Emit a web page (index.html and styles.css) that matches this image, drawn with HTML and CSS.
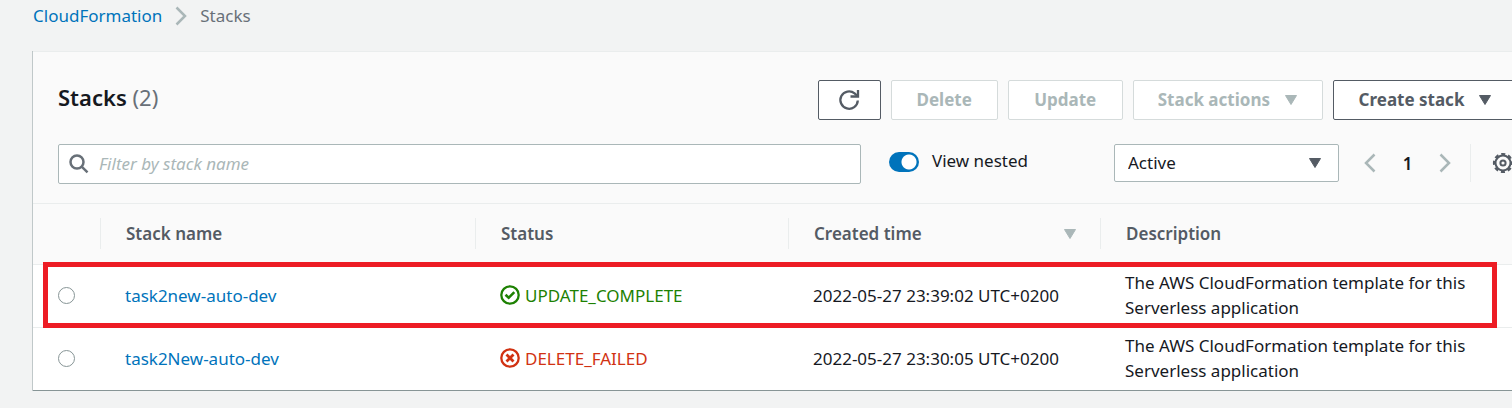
FILE: index.html
```html
<!DOCTYPE html>
<html lang="en">
<head>
<meta charset="utf-8">
<title>CloudFormation - Stacks</title>
<link rel="stylesheet" href="styles.css">
</head>
<body>
<nav class="breadcrumb" aria-label="Breadcrumb">
  <a class="link" href="#">CloudFormation</a>
  <svg class="chevron" width="12" height="20" viewBox="0 0 12 20"><path d="M1.500 1.500L10 10L1.500 18.500"/></svg>
  <span>Stacks</span>
</nav>
<main class="panel">
  <header class="panel-header">
    <h1 class="title">Stacks <span class="count">(2)</span></h1>
    <div class="actions">
      <button class="btn btn-icon" type="button" aria-label="Refresh">
        <svg width="22" height="22" viewBox="0 0 22 22" fill="none" stroke="currentColor" stroke-width="2.300"><path d="M19.800 11.500a8.700 8.700 0 1 1-3.200-7.200L19.500 7"/><path d="M20 1v6.500h-7.500"/></svg>
      </button>
      <button class="btn btn-delete" type="button" disabled>Delete</button>
      <button class="btn btn-update" type="button" disabled>Update</button>
      <button class="btn btn-menu" type="button" disabled>Stack actions <svg class="caret" width="14" height="12" viewBox="0 0 14 12"><path d="M1.500 1.500h11L7 10.500z"/></svg></button>
      <button class="btn btn-menu" type="button">Create stack <svg class="caret" width="14" height="12" viewBox="0 0 14 12"><path d="M1.500 1.500h11L7 10.500z"/></svg></button>
    </div>
  </header>
  <div class="filters">
    <div class="search">
      <svg width="20" height="20" viewBox="0 0 20 20" fill="none" stroke="currentColor" stroke-width="2.500"><circle cx="8" cy="8" r="6.500"/><path d="M12.700 12.700l5.800 5.600"/></svg>
      <input class="search-input" type="text" placeholder="Filter by stack name" aria-label="Filter by stack name">
    </div>
    <label class="toggle"><input class="switch" type="checkbox" role="switch" checked>View nested</label>
    <div class="select-box">
      <select class="select" aria-label="Stack status"><option>Active</option></select>
      <svg class="caret select-caret" width="14" height="12" viewBox="0 0 14 12"><path d="M1.500 1.500h11L7 10.500z"/></svg>
    </div>
    <div class="pager">
      <button class="plain" type="button" aria-label="Previous page"><svg class="chevron" width="12" height="20" viewBox="0 0 12 20"><path d="M10.500 1.500L2 10L10.500 18.500"/></svg></button>
      <span class="page">1</span>
      <button class="plain" type="button" aria-label="Next page"><svg class="chevron" width="12" height="20" viewBox="0 0 12 20"><path d="M1.500 1.500L10 10L1.500 18.500"/></svg></button>
    </div>
    <div class="settings">
      <button class="plain" type="button" aria-label="Preferences">
        <svg width="22" height="22" viewBox="0 0 22 22" fill="none" stroke="currentColor"><circle cx="11" cy="11" r="7.500" stroke-width="2"/><circle cx="11" cy="11" r="8.900" stroke-width="2.400" stroke-dasharray="4 2.990" stroke-dashoffset="2"/><circle cx="11" cy="11" r="2.600" stroke-width="2"/></svg>
      </button>
    </div>
  </div>
  <table class="stacks">
    <colgroup><col class="col-pick"><col class="col-name"><col class="col-status"><col class="col-time"><col></colgroup>
    <thead>
      <tr>
        <th aria-label="Selection"></th>
        <th><div class="head">Stack name</div></th>
        <th><div class="head">Status</div></th>
        <th><div class="head">Created time <svg class="caret sort" width="14" height="12" viewBox="0 0 14 12"><path d="M1.500 1.500h11L7 10.500z"/></svg></div></th>
        <th><div class="head">Description</div></th>
      </tr>
    </thead>
    <tbody>
      <tr class="highlight">
        <td><input class="radio" type="radio" name="stack" aria-label="task2new-auto-dev"><span class="outline"></span></td>
        <td><a class="link" href="#">task2new-auto-dev</a></td>
        <td><span class="status ok"><svg width="20" height="20" viewBox="0 0 20 20" fill="none" stroke="currentColor" stroke-width="2.300"><circle cx="10" cy="10" r="8.700"/><path d="M5.500 9.800l3.200 3 5.600-5.600" stroke-width="2.600"/></svg>UPDATE_COMPLETE</span></td>
        <td>2022-05-27 23:39:02 UTC+0200</td>
        <td><p class="description">The AWS CloudFormation template for this Serverless application</p></td>
      </tr>
      <tr>
        <td><input class="radio" type="radio" name="stack" aria-label="task2New-auto-dev"></td>
        <td><a class="link" href="#">task2New-auto-dev</a></td>
        <td><span class="status failed"><svg width="20" height="20" viewBox="0 0 20 20" fill="none" stroke="currentColor" stroke-width="2.300"><circle cx="10" cy="10" r="8.700"/><path d="M6.500 6.500l7 7M13.500 6.500l-7 7" stroke-width="2.800"/></svg>DELETE_FAILED</span></td>
        <td>2022-05-27 23:30:05 UTC+0200</td>
        <td><p class="description">The AWS CloudFormation template for this Serverless application</p></td>
      </tr>
    </tbody>
  </table>
</main>
</body>
</html>
```
FILE: styles.css
```css
* { box-sizing: border-box; }
body {
  margin: 0;
  overflow-x: hidden;
  background: #f2f3f3;
  color: #16191f;
  font: 17px/25px "Noto Sans", "Open Sans", sans-serif;
}
button, input, select { font: inherit; color: inherit; }
svg { display: block; flex: none; }
.link { color: #0073bb; text-decoration: none; }
.breadcrumb {
  display: flex;
  align-items: center;
  gap: 13px;
  padding: 3px 33px 0;
  color: #687078;
}
.chevron { fill: none; stroke: #aab7b8; stroke-width: 2.5; }
.caret { fill: currentColor; stroke: currentColor; stroke-width: 1; stroke-linejoin: round; }

/* The panel runs past the right edge of the window. */
.panel {
  margin: 23px -30px 0 33px;
  background: #fafafa;
  border-top: 1px solid #eaeded;
  border-bottom: 1px solid #879596;
  box-shadow: 0 1px 1px #d5dbdb, -1px 0 0 #bcc5c6;
}
.panel-header {
  display: flex;
  justify-content: space-between;
  padding: 28px 24px 0 25px;
}
.title { margin: 0; font-size: 22px; line-height: 34px; font-weight: 600; }
.count { color: #687078; font-weight: 400; }
.actions { display: flex; gap: 10px; }
.btn {
  display: flex;
  align-items: center;
  justify-content: center;
  gap: 14px;
  height: 40px;
  padding: 0 24px 1px;
  border: 1px solid #545b64;
  border-radius: 2px;
  background: #fff;
  color: #545b64;
  font-weight: 700;
}
.btn:disabled { border-color: #d5dbdb; color: #aab7b8; }
.btn-icon { width: 63px; padding: 0; }
.btn-delete { width: 107px; }
.btn-update { width: 115px; }
.btn-menu { min-width: 185px; }

.filters {
  display: flex;
  align-items: flex-start;
  padding: 24px 24px 19px 25px;
}
.search {
  display: flex;
  flex: 1;
  align-items: center;
  gap: 10px;
  height: 40px;
  padding: 0 10px;
  border: 1px solid #aab7b8;
  border-radius: 2px;
  background: #fff;
  color: #687078;
}
.search-input { flex: 1; min-width: 0; padding: 0 0 2px; border: 0; outline: 0; background: none; }
.search-input::placeholder { color: #aab7b8; font-style: italic; opacity: 1; }
.toggle { display: flex; gap: 13px; width: 253px; padding: 4px 0 0 28px; }
.switch {
  appearance: none;
  width: 30px;
  height: 20px;
  margin: 4px 0 0;
  border-radius: 10px;
  background: radial-gradient(circle at 20px 10px, #fff 7px, #0073bb 8px);
}
.select-box { display: grid; align-items: center; width: 225px; }
.select {
  grid-area: 1 / 1;
  appearance: none;
  height: 38px;
  padding: 0 13px 2px;
  border: 1px solid #aab7b8;
  border-radius: 2px;
  background: #fff;
}
.select-caret { grid-area: 1 / 1; justify-self: end; margin-right: 17px; color: #545b64; pointer-events: none; }
.plain { padding: 0; border: 0; background: none; color: #545b64; }
.pager {
  display: flex;
  align-items: center;
  justify-content: space-between;
  width: 131px;
  height: 38px;
  padding: 0 19px 0 25px;
}
.page { font-weight: 600; }
.settings {
  display: flex;
  align-items: center;
  height: 38px;
  padding: 0 4px 0 21px;
  border-left: 1px solid #eaeded;
}

.stacks { width: 100%; table-layout: fixed; border-collapse: separate; border-spacing: 0; }
.col-pick { width: 67px; }
.col-name { width: 375px; }
.col-status { width: 313px; }
.col-time { width: 312px; }
th { padding: 14px 0 15px; border-top: 1px solid #eaeded; text-align: left; font-weight: 600; color: #545b64; }
.head {
  display: flex;
  align-items: center;
  justify-content: space-between;
  height: 31px;
  padding: 0 23px 0 25px;
  border-left: 1px solid #eaeded;
}
.sort { color: #aab7b8; }
td { padding: 5px 0 7px 25px; border-top: 1px solid #eaeded; background: #fff; }
.description { max-width: 370px; margin: 0; }
.status { display: flex; align-items: center; gap: 5px; }
.ok { color: #1d8102; }
.failed { color: #d13212; }
.radio {
  appearance: none;
  display: block;
  width: 17px;
  height: 17px;
  margin: 0;
  border: 1px solid #879596;
  border-radius: 50%;
  background: #fff;
}
.highlight { position: relative; }
.outline {
  position: absolute;
  inset: -2px 45px -1px 10px;
  border: 5px solid #ed1c24;
  pointer-events: none;
}
```
